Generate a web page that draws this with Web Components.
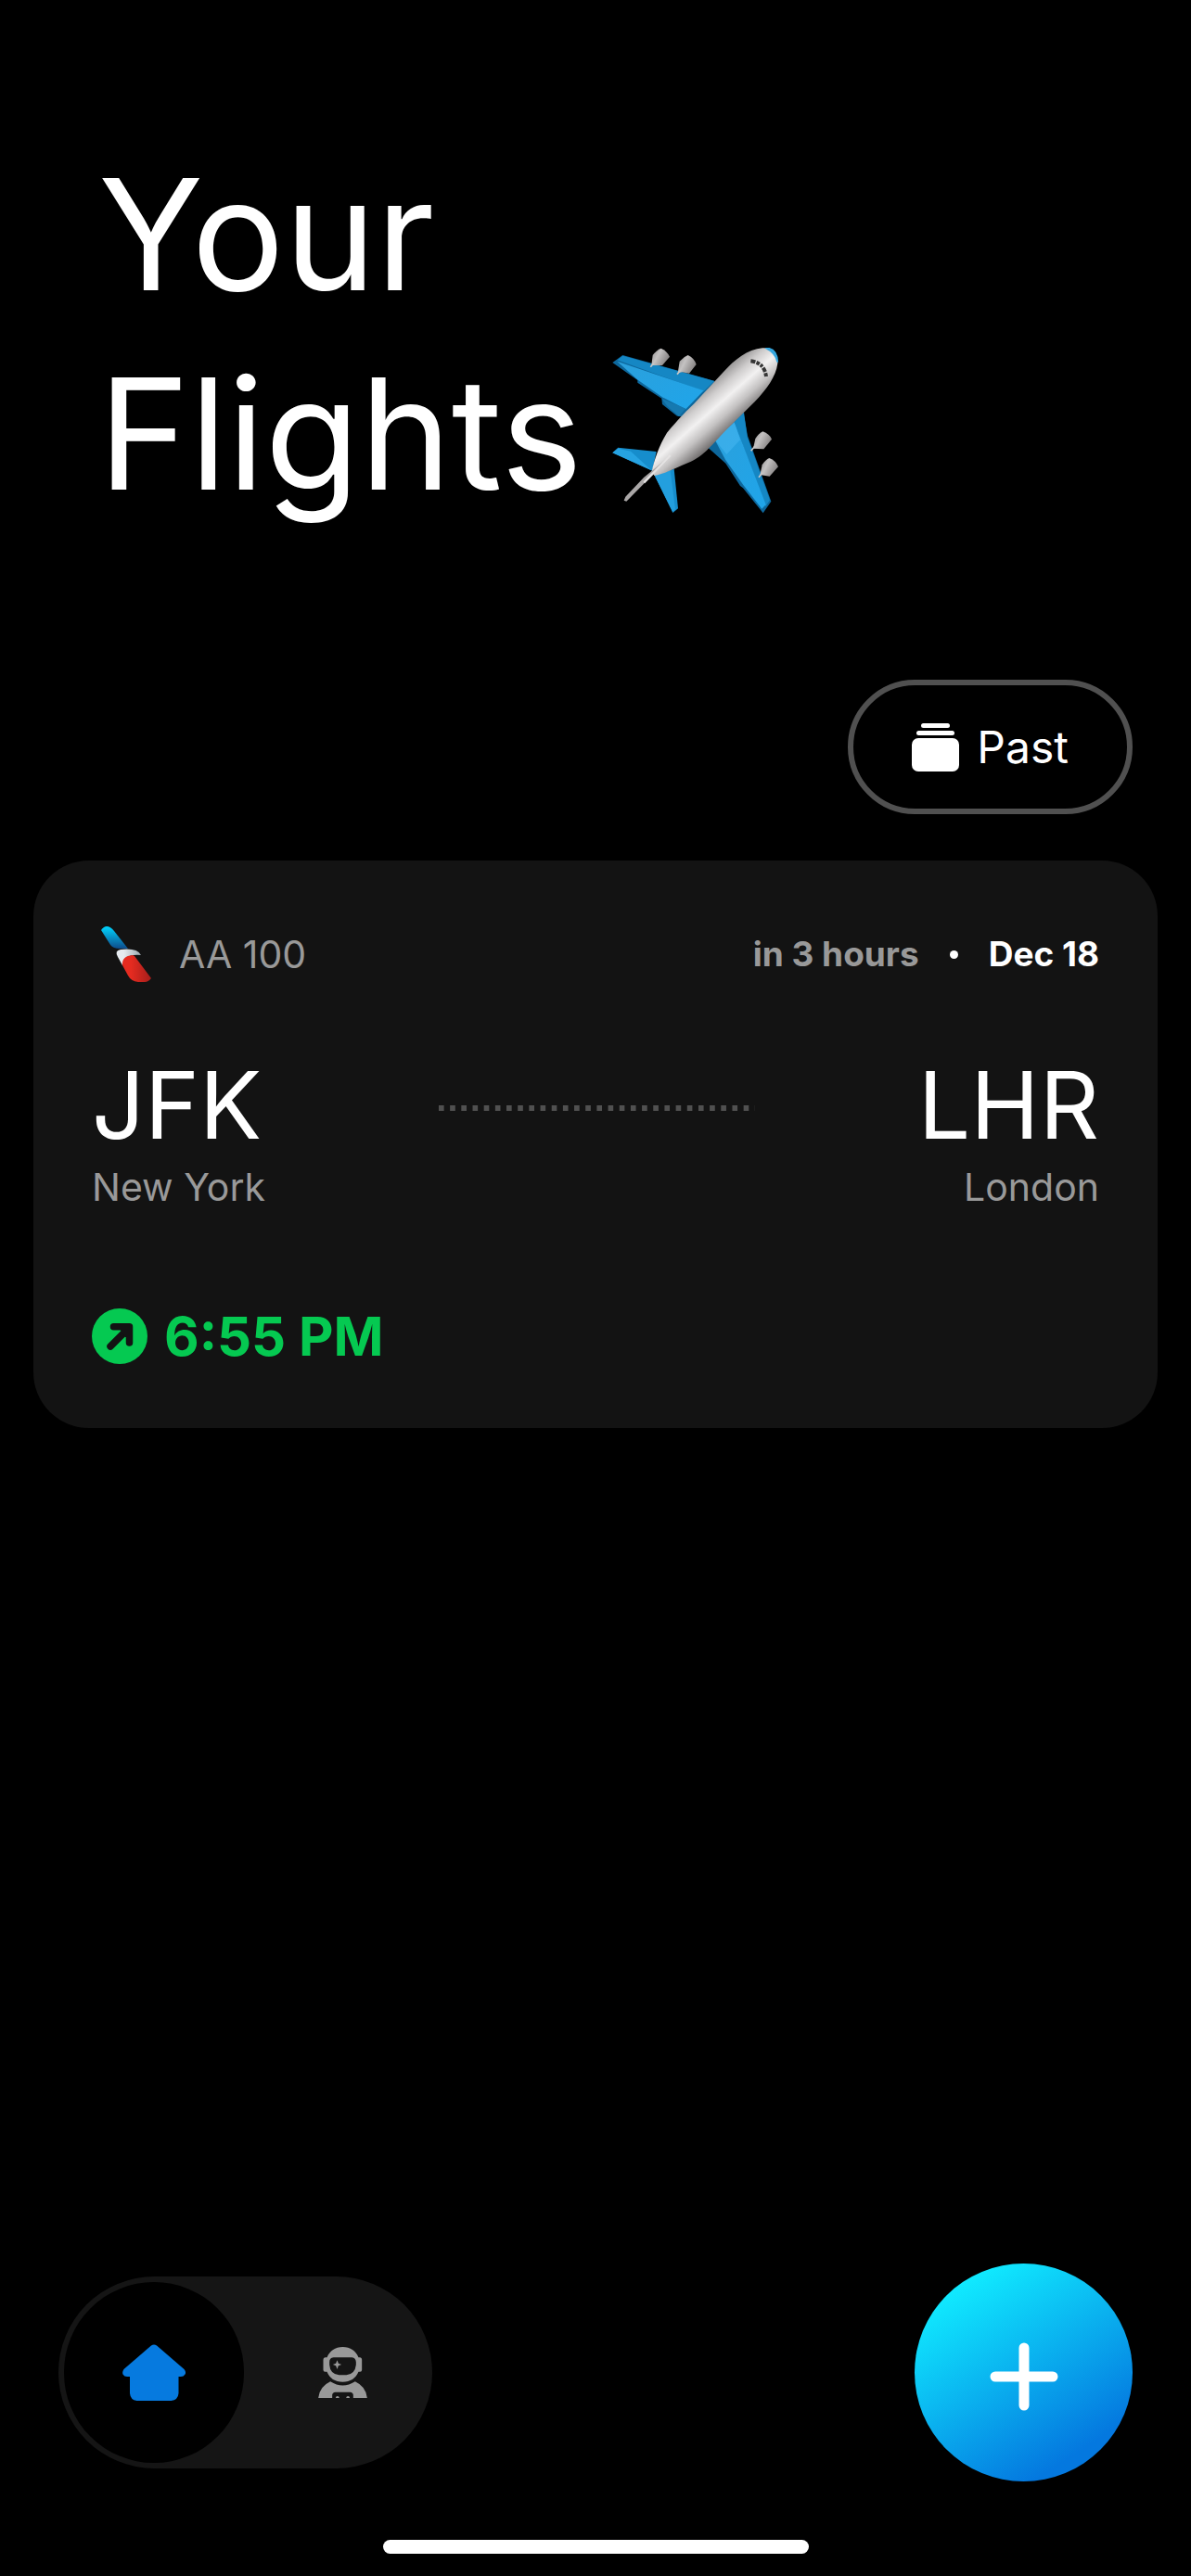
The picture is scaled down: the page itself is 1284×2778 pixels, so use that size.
<!DOCTYPE html>
<html lang="en">
<head>
<meta charset="utf-8">
<meta name="viewport" content="width=device-width, initial-scale=1">
<title>Your Flights</title>
<style>
  body {
    margin: 0;
    background: #000;
    color: #fff;
    font-family: Inter, Roboto, "Liberation Sans", sans-serif;
  }
</style>
</head>
<body>
<flights-app>
  <page-title slot="header">Your<br>Flights<plane-icon></plane-icon></page-title>
  <pill-button slot="actions">Past</pill-button>
  <flight-card flight="AA 100" countdown="in 3 hours" date="Dec 18" from="JFK" from-city="New York" to="LHR" to-city="London" departure="6:55 PM"></flight-card>
  <tab-bar slot="footer"></tab-bar>
  <add-button slot="footer"></add-button>
</flights-app>

<script>
class FlightsApp extends HTMLElement {
  constructor() {
    super();
    this.attachShadow({ mode: "open" }).innerHTML = `
      <style>
        :host {
          display: flex;
          flex-direction: column;
          box-sizing: border-box;
          min-height: 100vh;
          padding: 145px 36px 24px;
        }
        header { padding: 0 70px; }
        .actions {
          display: flex;
          justify-content: flex-end;
          padding: 158px 27px 50px;
        }
        footer { margin-top: auto; }
        .bar {
          display: flex;
          justify-content: space-between;
          align-items: center;
          padding: 0 27px 63px;
        }
        .home {
          width: 459px;
          max-width: 60%;
          height: 15px;
          margin: 0 auto;
          border-radius: 8px;
          background: #fff;
        }
      </style>
      <header><slot name="header"></slot></header>
      <div class="actions"><slot name="actions"></slot></div>
      <main><slot></slot></main>
      <footer>
        <div class="bar"><slot name="footer"></slot></div>
        <div class="home"></div>
      </footer>
    `;
  }
}

class PageTitle extends HTMLElement {
  constructor() {
    super();
    this.attachShadow({ mode: "open" }).innerHTML = `
      <style>
        :host { display: block; }
        h1 {
          margin: 0;
          font-size: 167px;
          font-weight: 400;
          line-height: 215px;
        }
      </style>
      <h1><slot></slot></h1>
    `;
  }
}

class PlaneIcon extends HTMLElement {
  constructor() {
    super();
    this.attachShadow({ mode: "open" }).innerHTML = `
      <style>
        :host { display: inline-block; margin-left: 32px; }
        svg { width: 180px; height: 180px; vertical-align: -27px; }
      </style>
      <svg viewBox="60 75 540 540" role="img" aria-label="Airplane">
        <defs>
          <linearGradient id="body" gradientUnits="userSpaceOnUse" x1="345" y1="215" x2="450" y2="335">
            <stop offset="0" stop-color="#9b9999"/>
            <stop offset=".22" stop-color="#cfcdcd"/>
            <stop offset=".45" stop-color="#f2f1f1"/>
            <stop offset=".7" stop-color="#c4c2c2"/>
            <stop offset="1" stop-color="#6f6c6c"/>
          </linearGradient>
          <linearGradient id="wing" x1="0" y1="0" x2="1" y2="1">
            <stop offset="0" stop-color="#2ba0dc"/>
            <stop offset="1" stop-color="#1fa5ea"/>
          </linearGradient>
          <linearGradient id="engine" x1="0" y1="0" x2="1" y2=".5">
            <stop offset="0" stop-color="#8d8a8a"/>
            <stop offset=".45" stop-color="#c4c2c2"/>
            <stop offset="1" stop-color="#858282"/>
          </linearGradient>
        </defs>
        <path d="M61 123 94 99 180 123 390 182 410 240 300 300 270 296 222 258 220 239 142 188 142 180Z" fill="#0d679c"/>
        <path d="M77 115 94 101 390 183 356 216Z" fill="#1587c4"/>
        <path d="M76 119 356 214 298 274 222 235 143 179Z" fill="url(#wing)"/>
        <path d="M220 239 298 272 276 297 238 264Z" fill="#1679b0"/>
        <path d="M370 398 484 282 498 360 574 572 548 610 483 529 474 522 427 449Z" fill="#0d679c"/>
        <path d="M455 315 486 284 497 364 570 568 556 588Z" fill="#1587c4"/>
        <path d="M392 373 455 316 557 583 544 596 484 519 426 437Z" fill="url(#wing)"/>
        <path d="M392 373 455 316 474 373 430 420Z" fill="#45b5f0" opacity=".6"/>
        <path d="M61 415 79 398 203 411 190 473Z" fill="#168dcc"/>
        <path d="M61 415 79 401 120 410 187 472Z" fill="#26a3e2"/>
        <path d="M197 488 260 467 273 595 256 609Z" fill="#168dcc"/>
        <path d="M197 488 248 472 264 598 256 606Z" fill="#239fde"/>
        <g fill="url(#engine)">
          <path d="M187 132 191 99Q204 82 218 77 237 85 246 104L222 132Z"/>
          <path d="M272 157 278 119Q291 104 305 99 325 108 332 129L309 158 286 154Z"/>
          <path d="M516 401 523 369Q534 352 547 346 569 354 576 371L550 403Z"/>
          <path d="M538 486 545 454Q556 437 568 432 589 440 597 460L569 491Z"/>
        </g>
        <path d="M184 137 194 125M270 161 282 147M509 409 522 393M534 494 546 479" stroke="#c9c7c7" stroke-width="5"/>
        <path d="M188 476C195 440 212 390 237 350 273 309 285 294 325 256L420 153C456 114 497 80 546 76 579 75 596 88 595 126 589 170 560 208 521 250L430 340C391 380 354 429 306 447 268 463 227 484 196 489Z" fill="url(#body)"/>
        <path d="M556 76Q593 76 595 122 588 91 556 76Z" fill="#35a7df" stroke="#35a7df" stroke-width="5"/>
        <path d="M508 118Q552 123 558 168" fill="none" stroke="#353535" stroke-width="12" stroke-dasharray="15 4 11 4 9 4"/>
        <path d="M249 423 242 434 165 512 106 572 98 569 103 557 162 495 190 472Z" fill="#aaa7a7"/>
        <path d="M248 423 240 432 163 511" stroke="#e5e3e3" stroke-width="7" fill="none"/>
      </svg>
    `;
  }
}

class PillButton extends HTMLElement {
  constructor() {
    super();
    this.attachShadow({ mode: "open" }).innerHTML = `
      <style>
        :host { display: block; }
        button {
          display: flex;
          align-items: center;
          gap: 19px;
          height: 145px;
          padding: 0 63px;
          border: 6px solid #505050;
          border-radius: 73px;
          background: #000;
          color: #fff;
          font: 400 48px/60px Inter, Roboto, sans-serif;
        }
        svg { width: 51px; height: 52px; }
      </style>
      <button type="button">
        <svg viewBox="0 0 51 52" fill="#fff" aria-hidden="true">
          <rect x="10" y="0" width="31" height="5" rx="2.5"/>
          <rect x="5" y="8" width="41" height="5" rx="2.5"/>
          <rect x="0" y="16" width="51" height="36" rx="7"/>
        </svg>
        <slot></slot>
      </button>
    `;
  }
}

class FlightCard extends HTMLElement {
  constructor() {
    super();
    this.attachShadow({ mode: "open" });
  }

  connectedCallback() {
    this.render();
  }

  render() {
    const get = (name) => this.getAttribute(name) || "";

    this.shadowRoot.innerHTML = `
      <style>
        :host {
          display: block;
          padding: 63px;
          border-radius: 60px;
          background: #131313;
          --muted: #999;
        }
        .top, .meta, .airline, .departure {
          display: flex;
          align-items: center;
        }
        .top { justify-content: space-between; height: 76px; }
        .airline { gap: 20px; font-size: 41px; line-height: 50px; color: var(--muted); }
        .airline svg { width: 74px; height: 76px; }
        .meta { gap: 33px; font-size: 37px; line-height: 44px; font-weight: 700; }
        .countdown { color: var(--muted); }
        .dot { width: 9px; height: 9px; border-radius: 50%; background: #fff; }
        .route {
          display: grid;
          grid-template-columns: 1fr 1fr 1fr;
          margin-top: 62px;
        }
        .code { font-size: 100px; line-height: 126px; }
        .city { font-size: 41px; line-height: 50px; color: var(--muted); }
        .to { text-align: right; }
        .path {
          height: 6px;
          margin: 63px 9px 0 12px;
          background: linear-gradient(90deg, #505050 50%, transparent 50%) 0 0 / 12px 6px round;
        }
        .departure {
          gap: 18px;
          margin-top: 100px;
          color: #05c951;
          font-size: 58px;
          line-height: 72px;
          font-weight: 700;
        }
        .departure svg { width: 60px; height: 60px; }
      </style>
      <div class="top">
        <div class="airline">
          <svg viewBox="0 0 74 76" aria-hidden="true">
            <defs>
              <linearGradient id="blue" x1="0" y1="0" x2="0" y2="1">
                <stop offset="0" stop-color="#00d5ff"/>
                <stop offset="1" stop-color="#0e4c8c"/>
              </linearGradient>
              <linearGradient id="grey" x1="0" y1="0" x2="1" y2="0">
                <stop offset=".3" stop-color="#e6ebf0"/>
                <stop offset="1" stop-color="#9aa8b0"/>
              </linearGradient>
              <linearGradient id="red" x1="0" y1="0" x2="1" y2="0">
                <stop offset=".3" stop-color="#e52b20"/>
                <stop offset="1" stop-color="#a51e1b"/>
              </linearGradient>
            </defs>
            <path d="M10 12Q13 8 16 8 20 8 24 13L39 32H30Q23 32 20 28Z" fill="url(#blue)"/>
            <path d="M33 50 28 41Q24 34 31 33 49 31 53 39 42 38 37 42 34 45 33 50Z" fill="url(#grey)"/>
            <path d="M33 50Q32 40 44 39L46 40 64 64Q61 68 57 68H50Q42 67 39 61Z" fill="url(#red)"/>
          </svg>
          <span>${get("flight")}</span>
        </div>
        <div class="meta">
          <span class="countdown">${get("countdown")}</span>
          <span class="dot"></span>
          <span>${get("date")}</span>
        </div>
      </div>
      <div class="route">
        <div>
          <div class="code">${get("from")}</div>
          <div class="city">${get("from-city")}</div>
        </div>
        <div class="path"></div>
        <div class="to">
          <div class="code">${get("to")}</div>
          <div class="city">${get("to-city")}</div>
        </div>
      </div>
      <div class="departure">
        <svg viewBox="0 0 60 60" aria-hidden="true">
          <circle cx="30" cy="30" r="30" fill="#05c951"/>
          <path d="M20 41 40 21" fill="none" stroke="#131313" stroke-width="7.5" stroke-linecap="round"/>
          <path d="M23.5 19.8H40.5V37" fill="none" stroke="#131313" stroke-width="7.5" stroke-linecap="round" stroke-linejoin="round"/>
          <path d="M30 22H40V31L36 31Z" fill="#131313"/>
        </svg>
        <span>${get("departure")}</span>
      </div>
    `;
  }
}

class TabBar extends HTMLElement {
  constructor() {
    super();
    this.attachShadow({ mode: "open" }).innerHTML = `
      <style>
        :host { display: block; }
        nav {
          display: flex;
          gap: 16px;
          padding: 6px;
          border-radius: 104px;
          background: #151515;
        }
        button {
          display: grid;
          place-items: center;
          width: 181px;
          height: 195px;
          padding: 0;
          border: 0;
          border-radius: 98px;
          background: none;
        }
        button[aria-current] { width: 194px; background: #000; }
        svg { display: block; }
      </style>
      <nav>
        <button type="button" aria-label="Home" aria-current="page">
          <svg width="68" height="62" viewBox="0 0 68 62" aria-hidden="true">
            <path d="M31 1.5Q34-.5 37 1.5L66.5 27Q69 30 67.5 32.5 66 35 63 35H60.5V53Q60 60 52.5 61H15.5Q8.5 60 8 53V35H5Q2 35 .5 32.5-.5 30 1.5 27Z" fill="#067adf"/>
          </svg>
        </button>
        <button type="button" aria-label="Profile">
          <svg width="53" height="55" viewBox="0 0 158 165" aria-hidden="true">
            <path fill="#999" fill-rule="evenodd" d="M79 0C104 0 122 13 130 34H135Q141 35 141 41V74Q141 80 135 80H130C121 101 104 113 79 113S37 101 28 80H22Q16 80 16 74V41Q16 35 22 34H28C37 13 54 0 79 0ZM49 34Q36 35 36 49V58Q38 88 67 91H91Q119 88 122 58V49Q121 35 109 34Z"/>
            <path fill="#999" d="M61 43 65 53 75 57 65 61 61 72 57 61 47 57 57 53Z"/>
            <path fill="#999" d="M39 112Q79 137 119 112 154 128 158 165H113V155Q112 147 103 146H55Q46 147 45 155V165H0Q4 128 39 112Z"/>
            <path fill="#999" d="M56 165Q57 159 62 159T68 165ZM90 165Q91 159 96 159T102 165Z"/>
          </svg>
        </button>
      </nav>
    `;
  }
}

class AddButton extends HTMLElement {
  constructor() {
    super();
    this.attachShadow({ mode: "open" }).innerHTML = `
      <style>
        :host { display: block; }
        button {
          display: grid;
          place-items: center;
          width: 235px;
          height: 235px;
          padding: 9px 0 0;
          border: 0;
          border-radius: 50%;
          background: linear-gradient(147deg, #10eaff 14%, #0478df 82%);
        }
      </style>
      <button type="button" aria-label="Add flight">
        <svg width="74" height="74" viewBox="0 0 74 74" aria-hidden="true">
          <path d="M37 6V68M6 37H68" stroke="#fff" stroke-width="11" stroke-linecap="round"/>
        </svg>
      </button>
    `;
  }
}

customElements.define("flights-app", FlightsApp);
customElements.define("page-title", PageTitle);
customElements.define("plane-icon", PlaneIcon);
customElements.define("pill-button", PillButton);
customElements.define("flight-card", FlightCard);
customElements.define("tab-bar", TabBar);
customElements.define("add-button", AddButton);
</script>
</body>
</html>
